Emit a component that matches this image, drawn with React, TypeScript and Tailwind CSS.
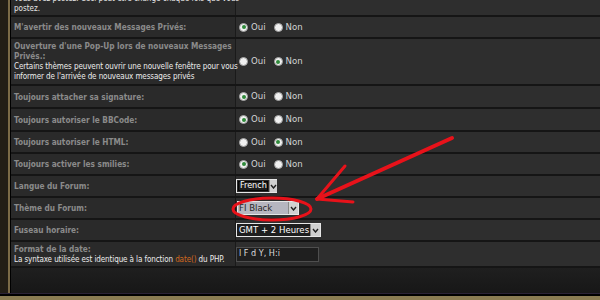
const Radio = ({ on }: { on: boolean }) => (
  <span className="inline-flex h-[9px] w-[9px] items-center justify-center rounded-full border border-[#a0a0a0] bg-[#f0f0f0]">
    {on && <span className="h-[4px] w-[4px] rounded-full bg-[#2f8a3a]" />}
  </span>
);

const YesNo = ({ yes }: { yes: boolean }) => (
  <div className="flex items-center pl-[3px] text-[9.5px] text-[#d4d4d4]">
    <Radio on={yes} />
    <span className="ml-[3px]">Oui</span>
    <span className="ml-[8px] flex">
      <Radio on={!yes} />
    </span>
    <span className="ml-[3px]">Non</span>
  </div>
);

const Arrow = () => (
  <span className="flex h-full w-[10px] items-center justify-center border-l border-[#8a8a8a] bg-[#d0d0d0]">
    <svg width="7" height="5" viewBox="0 0 7 5">
      <path d="M1 1 L3.5 4 L6 1" fill="none" stroke="#202020" strokeWidth="1.4" />
    </svg>
  </span>
);

type Row = { label: string; sub?: React.ReactNode; h: number; right: React.ReactNode };

const rows: Row[] = [
  { label: "M'avertir des nouveaux Messages Privés:", h: 22, right: <YesNo yes /> },
  {
    label: "Ouverture d'une Pop-Up lors de nouveaux Messages Privés.:",
    sub: (
      <>
        Certains thèmes peuvent ouvrir une nouvelle fenêtre pour vous
        <br />
        informer de l'arrivée de nouveaux messages privés
      </>
    ),
    h: 47,
    right: <YesNo yes={false} />,
  },
  { label: "Toujours attacher sa signature:", h: 23, right: <YesNo yes /> },
  { label: "Toujours autoriser le BBCode:", h: 23, right: <YesNo yes /> },
  { label: "Toujours autoriser le HTML:", h: 22, right: <YesNo yes={false} /> },
  { label: "Toujours activer les smilies:", h: 22, right: <YesNo yes /> },
  {
    label: "Langue du Forum:",
    h: 22,
    right: (
      <div className="flex h-[14px] w-[41px] items-stretch border border-[#e6e6e6] bg-[#2a2a2a]">
        <span className="m-[1px] flex flex-1 items-center border border-[#050505] bg-[#1e1e1e] pl-[1px] text-[9px] text-white">
          French
        </span>
        <Arrow />
      </div>
    ),
  },
  {
    label: "Thème du Forum:",
    h: 22,
    right: (
      <div className="ml-[1px] flex h-[14px] w-[62px] items-stretch border border-[#e6e6e6] bg-[#b6b6c0]">
        <span className="flex flex-1 items-center pl-[1px] text-[9.5px] text-[#262626]">FI Black</span>
        <Arrow />
      </div>
    ),
  },
  {
    label: "Fuseau horaire:",
    h: 22,
    right: (
      <div className="flex h-[14px] w-[85px] items-stretch border border-[#e6e6e6] bg-[#1e1e1e]">
        <span className="flex flex-1 items-center pl-[2px] text-[9.5px] text-white">GMT + 2 Heures</span>
        <Arrow />
      </div>
    ),
  },
  {
    label: "Format de la date:",
    sub: (
      <>
        La syntaxe utilisée est identique à la fonction <span className="text-[#d2691e]">date()</span> du PHP.
      </>
    ),
    h: 26,
    right: (
      <div className="flex h-[15px] w-[83px] items-center border border-[#4e4e4e] bg-[#1f1f1f] pl-[2px] text-[9px] text-[#dcdcdc]">
        l F d Y, H:i
      </div>
    ),
  },
];

export default function App() {
  return (
    <div
      className="relative flex h-[300px] w-[600px] flex-col overflow-hidden bg-[#221d15]"
      style={{ fontFamily: "'DejaVu Sans Condensed', 'DejaVu Sans', sans-serif" }}
    >
      <div className="flex flex-1 pl-[8px]">
        <div className="flex flex-1 border-l-2 border-[#7b6a46]">
          <div className="flex flex-1 flex-col border-l border-black bg-[#2e2e2e]">
            {/* row cut by the top edge */}
            <div className="flex h-[17px] overflow-hidden border-b-2 border-[#151515]">
              <div className="flex w-[225px] items-end border-r border-[#1a1a1a] bg-[#2a2a2a] pb-[1px] pl-[3px] text-[8px] leading-[10px] text-[#e6e6e6]">
                <div className="whitespace-nowrap">
                  Vous avez postez. Ceci peut être changé chaque fois que vous
                  <br />
                  postez.
                </div>
              </div>
              <div className="flex-1" />
            </div>
            {rows.map((r) => (
              <div key={r.label} className="flex border-b-2 border-[#151515]" style={{ height: r.h }}>
                <div className="flex w-[225px] flex-col justify-center border-r border-[#1a1a1a] bg-[#2a2a2a] pl-[3px]">
                  <div className="text-[8.2px] font-bold leading-[10px] text-[#8a8a8a]">{r.label}</div>
                  {r.sub && (
                    <div className="mt-[1px] whitespace-nowrap text-[8px] leading-[10px] tracking-[-0.1px] text-[#ececec]">
                      {r.sub}
                    </div>
                  )}
                </div>
                <div className="flex flex-1 items-center">{r.right}</div>
              </div>
            ))}
            <div className="flex-1 bg-gradient-to-b from-[#1f1f1f] to-[#171717]" />
          </div>
        </div>
      </div>
      <div className="h-[1px] bg-[#2a2236]" />
      <div className="h-[2px] bg-black" />
      <div className="h-[4px] bg-[#8a7c52]" />

      <svg className="pointer-events-none absolute left-0 top-0" width="600" height="300">
        <ellipse cx="272" cy="209" rx="39" ry="11" fill="none" stroke="#e8121a" strokeWidth="3" />
        <path d="M452 138 L317 199" stroke="#e8121a" strokeWidth="4" strokeLinecap="round" fill="none" />
        <path d="M345 166 L317 199 L353 202" stroke="#e8121a" strokeWidth="3" strokeLinecap="round" strokeLinejoin="round" fill="none" />
      </svg>
    </div>
  );
}
